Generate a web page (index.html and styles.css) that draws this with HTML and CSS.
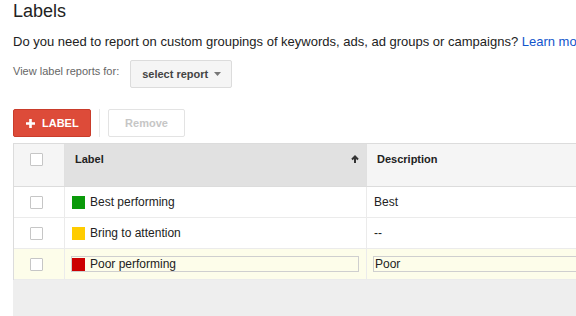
FILE: index.html
```html
<!DOCTYPE html>
<html lang="en">
<head>
  <meta charset="UTF-8">
  <title>Labels</title>
  <link rel="stylesheet" href="styles.css">
</head>
<body>
  <div class="page">
    <h1 class="title">Labels</h1>
    <p class="intro">Do you need to report on custom groupings of keywords, ads, ad groups or campaigns? <a href="#">Learn more</a></p>

    <div class="report-bar">
      <span class="report-label">View label reports for:</span>
      <button class="btn btn-select">select report
        <svg class="caret" width="7" height="4" viewBox="0 0 7 4"><path d="M0 0h7L3.5 4z" fill="#777"/></svg>
      </button>
    </div>

    <div class="toolbar">
      <button class="btn btn-red">
        <svg width="9" height="9" viewBox="0 0 9 9"><path d="M4.5 0v9M0 4.5h9" stroke="#fff" stroke-width="2.6"/></svg>
        LABEL
      </button>
      <span class="divider"></span>
      <button class="btn btn-remove" disabled>Remove</button>
    </div>

    <!-- Labels table -->
    <div class="grid">
      <div class="row head">
        <div class="cell check"><span class="checkbox"></span></div>
        <div class="cell name sorted">
          <span>Label</span>
          <svg width="8" height="8" viewBox="0 0 8 8"><path d="M4 8V1.5M1 4.5L4 1.5L7 4.5" stroke="#333" stroke-width="2" fill="none"/></svg>
        </div>
        <div class="cell desc">Description</div>
      </div>

      <div class="row">
        <div class="cell check"><span class="checkbox"></span></div>
        <div class="cell name"><span class="swatch green"></span>Best performing</div>
        <div class="cell desc">Best</div>
      </div>

      <div class="row">
        <div class="cell check"><span class="checkbox"></span></div>
        <div class="cell name"><span class="swatch yellow"></span>Bring to attention</div>
        <div class="cell desc">--</div>
      </div>

      <div class="row editing">
        <div class="cell check"><span class="checkbox"></span></div>
        <div class="cell name">
          <div class="edit-box"><span class="swatch red"></span>Poor performing</div>
        </div>
        <div class="cell desc">
          <div class="edit-box edit-desc">Poor</div>
        </div>
      </div>
    </div>
    <div class="grid-foot"></div>
  </div>
</body>
</html>
```

FILE: styles.css
```css
* {
  margin: 0;
  padding: 0;
  box-sizing: border-box;
}

body {
  font-family: "Liberation Sans", Arial, sans-serif;
  color: #222;
  background: #fff;
  overflow: hidden;
}

.page {
  padding-left: 13px;
  width: 700px;
}

.title {
  font-size: 18px;
  font-weight: normal;
  line-height: 20px;
  padding-top: 1px;
}

.intro {
  margin-top: 13px;
  font-size: 13px;
  line-height: 16px;
  white-space: nowrap;
}

.intro a {
  color: #15c;
  text-decoration: none;
}

.report-bar {
  display: flex;
  align-items: flex-start;
  margin-top: 10px;
}

.report-label {
  font-size: 11px;
  line-height: 14px;
  color: #666;
  margin-top: 4px;
  margin-right: 11px;
}

.btn {
  font-family: inherit;
  font-size: 11px;
  font-weight: bold;
  height: 28px;
  border-radius: 2px;
  display: flex;
  align-items: center;
}

.btn-select {
  background: #f5f5f5;
  border: 1px solid #dcdcdc;
  color: #444;
  padding: 0 10px 0 11px;
  gap: 6px;
}

.toolbar {
  display: flex;
  margin-top: 21px;
}

.btn-red {
  width: 78px;
  background: #dd4b39;
  border: 1px solid #c93c2b;
  color: #fff;
  padding-left: 12px;
  gap: 7px;
}

.divider {
  width: 1px;
  height: 28px;
  background: #e8e8e8;
  margin: 0 8px;
}

.btn-remove {
  width: 77px;
  justify-content: center;
  background: #fff;
  border: 1px solid #e3e3e3;
  color: #c6c6c6;
}

.grid {
  margin-top: 6px;
  border-top: 1px solid #dcdcdc;
  border-left: 1px solid #dcdcdc;
}

.row {
  display: grid;
  grid-template-columns: 51px 302px 320px;
  height: 31px;
  border-bottom: 1px solid #ebebeb;
  font-size: 12px;
}

.row.head {
  height: 43px;
  border-bottom-color: #dcdcdc;
  font-size: 11px;
  font-weight: bold;
}

.cell {
  display: flex;
  align-items: center;
  border-right: 1px solid #ebebeb;
}

.head .cell {
  align-items: flex-start;
  background: #f5f5f5;
  padding-top: 8px;
  line-height: 14px;
  border-right-color: #e0e0e0;
}

.head .sorted {
  background: #e1e1e1;
  justify-content: space-between;
  padding-right: 7px;
}

.head .sorted svg {
  margin-top: 3px;
}

.check {
  padding-left: 16px;
}

.head .check .checkbox {
  margin-top: 1px;
}

.checkbox {
  width: 13px;
  height: 13px;
  border: 1px solid #c6c6c6;
  border-radius: 1px;
  background: #fff;
}

.name {
  padding-left: 7px;
}

.head .name,
.head .desc {
  padding-left: 10px;
}

.desc {
  padding-left: 7px;
}

.swatch {
  width: 13px;
  height: 13px;
  margin-right: 5px;
}

.green { background: #0a9a0a; }
.yellow { background: #ffcc00; }
.red { background: #cc0000; }

.editing {
  background: #fdfdea;
}

.editing .name {
  padding-left: 6px;
  padding-right: 7px;
}

.editing .desc {
  padding-left: 6px;
}

.edit-box {
  display: flex;
  align-items: center;
  width: 100%;
  height: 16px;
  border: 1px solid #cfcfcf;
  background: #fdfdea;
}

.edit-desc {
  padding-left: 1px;
}

.grid-foot {
  height: 40px;
  background: #eee;
}
```
